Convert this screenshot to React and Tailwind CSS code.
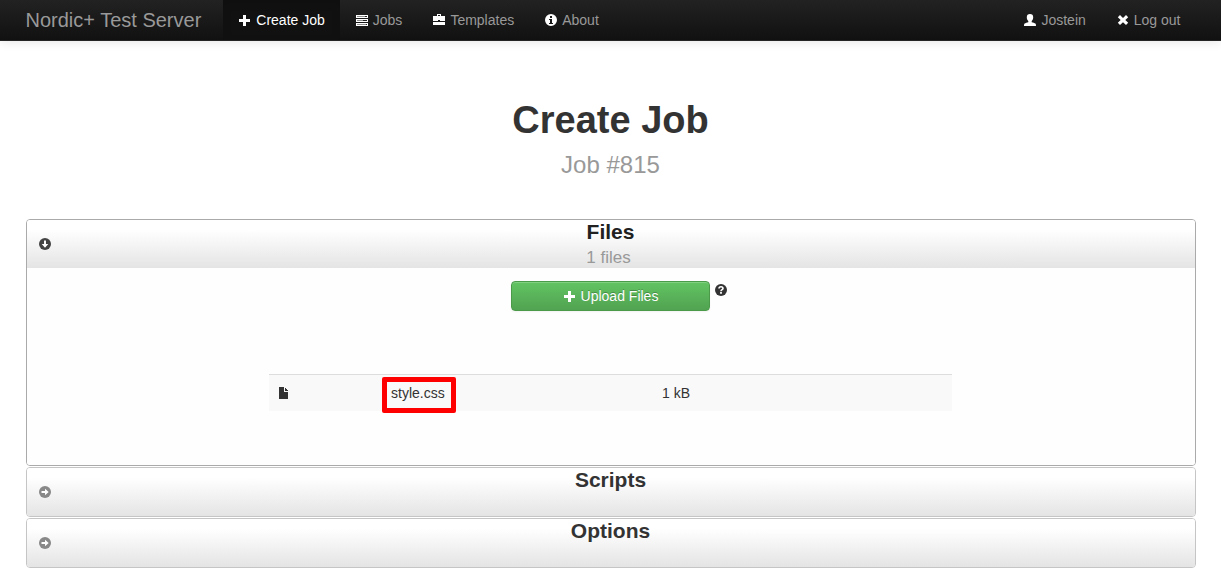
import React from "react";

function Icon({ children, className = "" }) {
  return (
    <svg
      viewBox="0 0 14 14"
      width="14"
      height="14"
      fill="currentColor"
      aria-hidden="true"
      className={"shrink-0 " + className}
    >
      {children}
    </svg>
  );
}

const PlusIcon = (props) => (
  <Icon {...props}>
    <path d="M5 2h3v4h4v3H8v4H5V9H1V6h4z" shapeRendering="crispEdges" />
  </Icon>
);

const TasksIcon = (props) => (
  <Icon {...props}>
    <path shapeRendering="crispEdges" d="M1 2h12v3H1zM1 6h12v3H1zM1 10h12v3H1z" />
    <path shapeRendering="crispEdges" fill="#8a8a8a" d="M2 3h8v1H2zM2 7h6v1H2zM2 11h9v1H2z" />
    <path shapeRendering="crispEdges" fill="#222" d="M10 3h2v1h-2zM8 7h4v1H8zM11 11h1v1h-1z" />
  </Icon>
);

const BriefcaseIcon = (props) => (
  <Icon {...props}>
    <path
      fillRule="evenodd"
      shapeRendering="crispEdges"
      d="M5 1h4v2h4v5H8V7H6v1H1V3h4zM6 2v1h2V2zM1 9h12v3H1z"
    />
  </Icon>
);

const InfoIcon = (props) => (
  <Icon {...props}>
    <path
      fillRule="evenodd"
      d="M7 1a6 6 0 1 0 0 12A6 6 0 0 0 7 1zM6 3h2v2H6zM5 6h3v4h1v1H5v-1h1V7H5z"
    />
  </Icon>
);

const UserIcon = (props) => (
  <Icon {...props}>
    <path d="M7 1c2.100 0 3.200 1.200 3.200 3.200 0 1.600-.6 2.900-1.500 3.700v1.300c1.300.5 2.800.7 3.700 1.300.5.400.6 1.500.6 2.500H1c0-1 .1-2.100.6-2.500.9-.6 2.400-.8 3.700-1.300V7.900c-.9-.8-1.500-2.100-1.500-3.700C3.800 2.200 4.900 1 7 1z" />
  </Icon>
);

const RemoveIcon = (props) => (
  <Icon {...props}>
    <path d="M4 2l3 3 3-3 2.200 2.200L9.300 7l2.900 2.800L10 12 7 9.200 4 12 1.800 9.800 4.700 7 1.800 4.200z" />
  </Icon>
);

const FileIcon = (props) => (
  <Icon {...props}>
    <path shapeRendering="crispEdges" d="M2 1h5v5h4v7H2zM8 2h1v1h1v1h1v1H8z" />
  </Icon>
);

const HelpIcon = (props) => (
  <Icon {...props}>
    <circle cx="7" cy="7" r="6" />
    <path d="M5 5.600C5 4.300 5.800 3.700 7 3.700s2 .7 2 1.700c0 1.300-2 1.300-2 2.800" fill="none" stroke="#fff" strokeWidth="1.600" />
    <path d="M6.100 9.100h1.800v1.700H6.100z" fill="#fff" />
  </Icon>
);

const ArrowIcon = ({ open }) => (
  <Icon className={open ? "text-[#444]" : "text-[#888]"}>
    <circle cx="7" cy="7" r="6" />
    <path
      d="M3.500 6H7V3.700L10.700 7 7 10.300V8H3.500z"
      fill="#fff"
      transform={open ? "rotate(90 7 7)" : undefined}
    />
  </Icon>
);

function NavLink({ icon: Glyph, label, active }) {
  return (
    <li>
      <a
        href="#"
        aria-current={active ? "page" : undefined}
        className={
          "flex h-10 items-center gap-1 px-[15px] " +
          (active ? "bg-[#111] text-white shadow-[inset_0_3px_8px_rgba(0,0,0,0.125)]" : "text-[#999]")
        }
      >
        <Glyph className="text-white" />
        {label}
      </a>
    </li>
  );
}

function Section({ title, subtitle, open, children }) {
  return (
    <section className={"overflow-hidden rounded border " + (open ? "border-[#aaa]" : "border-[#c5c5c5]")}>
      <button
        type="button"
        aria-expanded={Boolean(open)}
        className="grid w-full grid-cols-[1fr_auto_1fr] grid-rows-[48px] items-center bg-linear-to-b from-white from-20% to-[#e4e4e4] px-[11px] text-center"
      >
        <ArrowIcon open={open} />
        <span className="flex flex-col self-start">
          <span className={"text-[21px] leading-6 font-bold " + (open ? "text-[#212121]" : "text-[#333]")}>
            {title}
          </span>
          {subtitle && <span className="pr-1 text-[17px] leading-7 text-[#999]">{subtitle}</span>}
        </span>
      </button>
      {children}
    </section>
  );
}

export default function App() {
  return (
    <div className="bg-white font-['Liberation_Sans',Arial,sans-serif] text-sm leading-5 text-[#333]">
      <header className="border-b border-[#252525] bg-linear-to-b from-[#222] to-[#111] shadow-[0_1px_10px_rgba(0,0,0,0.1)]">
        <nav className="mx-auto flex max-w-[1170px] items-center">
          <a href="#" className="pr-[22px] text-xl leading-5 text-[#999]">
            Nordic+ Test Server
          </a>
          <ul className="flex">
            <NavLink icon={PlusIcon} label="Create Job" active />
            <NavLink icon={TasksIcon} label="Jobs" />
            <NavLink icon={BriefcaseIcon} label="Templates" />
            <NavLink icon={InfoIcon} label="About" />
          </ul>
          <ul className="ml-auto flex">
            <NavLink icon={UserIcon} label="Jostein" />
            <NavLink icon={RemoveIcon} label="Log out" />
          </ul>
        </nav>
      </header>

      <main className="mx-auto max-w-[1170px] pb-4">
        <div className="pt-[59px] pb-[34px] text-center">
          <h1 className="text-[38px] leading-10 font-bold">Create Job</h1>
          <p className="mt-[5px] text-2xl leading-10 text-[#999]">Job #815</p>
        </div>

        <div className="flex flex-col gap-px">
          <Section title="Files" subtitle="1 files" open>
            <div className="flex flex-col items-center bg-[#fefefe] pt-[13px] pb-[54px]">
              <div className="grid w-full grid-cols-[1fr_auto_1fr] items-start gap-1">
                <button
                  type="button"
                  className="col-start-2 flex h-[30px] w-[199px] items-center justify-center gap-1 rounded border border-[#4a9a4a] bg-linear-to-b from-[#62c462] to-[#51a351] text-white shadow-[inset_0_1px_0_rgba(255,255,255,0.2),0_1px_2px_rgba(0,0,0,0.05)] text-shadow-[0_-1px_0_rgba(0,0,0,0.25)]"
                >
                  <PlusIcon />
                  Upload Files
                </button>
                <button type="button" aria-label="Help" className="mt-0.5 justify-self-start text-[#333]">
                  <HelpIcon />
                </button>
              </div>
              <table className="mt-[63px] w-[683px] max-w-full table-fixed border-t border-[#ddd] bg-[#f9f9f9]">
                <colgroup>
                  <col className="w-[114px]" />
                  <col className="w-[271px]" />
                  <col />
                </colgroup>
                <tbody>
                  <tr>
                    <td className="p-2">
                      <FileIcon />
                    </td>
                    <td className="p-2">
                      <span className="relative inline-block align-top">
                        style.css
                        <span className="absolute -top-1.5 -right-[11px] -bottom-2.5 -left-[9px] rounded-xs border-5 border-[#f00]" />
                      </span>
                    </td>
                    <td className="p-2">1 kB</td>
                  </tr>
                </tbody>
              </table>
            </div>
          </Section>
          <Section title="Scripts" />
          <Section title="Options" />
        </div>
      </main>
    </div>
  );
}
